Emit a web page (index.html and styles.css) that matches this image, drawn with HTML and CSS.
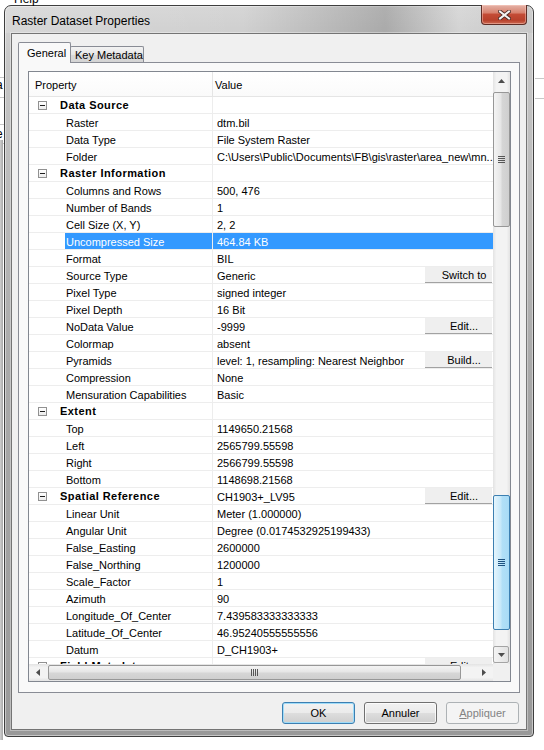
FILE: index.html
```html
<!DOCTYPE html>
<html lang="en">

<head>
  <meta charset="UTF-8">
  <title>Raster Dataset Properties</title>
  <link rel="stylesheet" href="styles.css">
</head>

<body>
  <div class="desktop">
    <!-- app behind the dialog -->
    <span class="behind-help">Help</span>
    <div class="behind-left">
      <span class="bl-line l1"></span>
      <span class="bl-char c1">a</span>
      <span class="bl-line l2"></span>
      <span class="bl-line l3"></span>
      <span class="bl-char c2">e</span>
      <span class="bl-line l4"></span>
      <span class="bl-bar"></span>
    </div>
    <div class="behind-right">
      <span class="br-line r1"></span>
      <span class="br-line r2"></span>
    </div>

    <div class="window">
      <div class="titlebar">
        <span class="title">Raster Dataset Properties</span>
        <div class="close">
          <svg width="13" height="10" viewBox="0 0 13 10">
            <path d="M2 1.5 L11 8.5 M11 1.5 L2 8.5" stroke="#4b2a26" stroke-width="3.8" stroke-linecap="square" fill="none"/>
            <path d="M2 1.5 L11 8.5 M11 1.5 L2 8.5" stroke="#f4f4f4" stroke-width="2" stroke-linecap="square" fill="none"/>
          </svg>
        </div>
      </div>

      <div class="client">
        <div class="tabs">
          <div class="tab active">General</div>
          <div class="tab">Key Metadata</div>
        </div>

        <div class="tab-page">
          <div class="grid">
            <div class="grid-main">
              <div class="grid-head">
                <div class="prop">Property</div>
                <div class="val">Value</div>
              </div>
              <div class="grid-body">
                <div class="row group"><div class="prop"><span class="minus"></span><span class="label">Data Source</span></div><div class="val"></div></div>
                <div class="row"><div class="prop"><span class="label">Raster</span></div><div class="val"><span class="vtext">dtm.bil</span></div></div>
                <div class="row"><div class="prop"><span class="label">Data Type</span></div><div class="val"><span class="vtext">File System Raster</span></div></div>
                <div class="row"><div class="prop"><span class="label">Folder</span></div><div class="val"><span class="vtext">C:\Users\Public\Documents\FB\gis\raster\area_new\mn..</span></div></div>
                <div class="row group"><div class="prop"><span class="minus"></span><span class="label">Raster Information</span></div><div class="val"></div></div>
                <div class="row"><div class="prop"><span class="label">Columns and Rows</span></div><div class="val"><span class="vtext">500, 476</span></div></div>
                <div class="row"><div class="prop"><span class="label">Number of Bands</span></div><div class="val"><span class="vtext">1</span></div></div>
                <div class="row"><div class="prop"><span class="label">Cell Size (X, Y)</span></div><div class="val"><span class="vtext">2, 2</span></div></div>
                <div class="row sel"><div class="prop"><span class="label">Uncompressed Size</span></div><div class="val"><span class="vtext">464.84 KB</span></div></div>
                <div class="row"><div class="prop"><span class="label">Format</span></div><div class="val"><span class="vtext">BIL</span></div></div>
                <div class="row"><div class="prop"><span class="label">Source Type</span></div><div class="val"><span class="vtext">Generic</span><span class="cell-btn">Switch to</span></div></div>
                <div class="row"><div class="prop"><span class="label">Pixel Type</span></div><div class="val"><span class="vtext">signed integer</span></div></div>
                <div class="row"><div class="prop"><span class="label">Pixel Depth</span></div><div class="val"><span class="vtext">16 Bit</span></div></div>
                <div class="row"><div class="prop"><span class="label">NoData Value</span></div><div class="val"><span class="vtext">-9999</span><span class="cell-btn">Edit...</span></div></div>
                <div class="row"><div class="prop"><span class="label">Colormap</span></div><div class="val"><span class="vtext">absent</span></div></div>
                <div class="row"><div class="prop"><span class="label">Pyramids</span></div><div class="val"><span class="vtext">level: 1, resampling: Nearest Neighbor</span><span class="cell-btn">Build...</span></div></div>
                <div class="row"><div class="prop"><span class="label">Compression</span></div><div class="val"><span class="vtext">None</span></div></div>
                <div class="row"><div class="prop"><span class="label">Mensuration Capabilities</span></div><div class="val"><span class="vtext">Basic</span></div></div>
                <div class="row group"><div class="prop"><span class="minus"></span><span class="label">Extent</span></div><div class="val"></div></div>
                <div class="row"><div class="prop"><span class="label">Top</span></div><div class="val"><span class="vtext">1149650.21568</span></div></div>
                <div class="row"><div class="prop"><span class="label">Left</span></div><div class="val"><span class="vtext">2565799.55598</span></div></div>
                <div class="row"><div class="prop"><span class="label">Right</span></div><div class="val"><span class="vtext">2566799.55598</span></div></div>
                <div class="row"><div class="prop"><span class="label">Bottom</span></div><div class="val"><span class="vtext">1148698.21568</span></div></div>
                <div class="row group"><div class="prop"><span class="minus"></span><span class="label">Spatial Reference</span></div><div class="val"><span class="vtext">CH1903+_LV95</span><span class="cell-btn">Edit...</span></div></div>
                <div class="row"><div class="prop"><span class="label">Linear Unit</span></div><div class="val"><span class="vtext">Meter (1.000000)</span></div></div>
                <div class="row"><div class="prop"><span class="label">Angular Unit</span></div><div class="val"><span class="vtext">Degree (0.0174532925199433)</span></div></div>
                <div class="row"><div class="prop"><span class="label">False_Easting</span></div><div class="val"><span class="vtext">2600000</span></div></div>
                <div class="row"><div class="prop"><span class="label">False_Northing</span></div><div class="val"><span class="vtext">1200000</span></div></div>
                <div class="row"><div class="prop"><span class="label">Scale_Factor</span></div><div class="val"><span class="vtext">1</span></div></div>
                <div class="row"><div class="prop"><span class="label">Azimuth</span></div><div class="val"><span class="vtext">90</span></div></div>
                <div class="row"><div class="prop"><span class="label">Longitude_Of_Center</span></div><div class="val"><span class="vtext">7.439583333333333</span></div></div>
                <div class="row"><div class="prop"><span class="label">Latitude_Of_Center</span></div><div class="val"><span class="vtext">46.95240555555556</span></div></div>
                <div class="row"><div class="prop"><span class="label">Datum</span></div><div class="val"><span class="vtext">D_CH1903+</span></div></div>
                <div class="row group"><div class="prop"><span class="minus"></span><span class="label">Field Metadata</span></div><div class="val"><span class="vtext"></span><span class="cell-btn">Edit...</span></div></div>
              </div>
            </div>

            <div class="vscroll">
              <div class="arrow up">
                <svg width="7" height="4" viewBox="0 0 7 4"><path d="M0 4 L3.5 0 L7 4 Z" fill="#4d4d4d"/></svg>
              </div>
              <div class="thumb gray-v"><span class="grip-v"></span></div>
              <div class="thumb blue-v"><span class="grip-v"></span></div>
              <div class="arrow down boxed">
                <svg width="7" height="4" viewBox="0 0 7 4"><path d="M0 0 L7 0 L3.5 4 Z" fill="#4d4d4d"/></svg>
              </div>
            </div>

            <div class="hscroll">
              <div class="arrow left">
                <svg width="4" height="7" viewBox="0 0 4 7"><path d="M4 0 L4 7 L0 3.5 Z" fill="#4d4d4d"/></svg>
              </div>
              <div class="thumb gray-h"><span class="grip-h"></span></div>
              <div class="arrow right">
                <svg width="4" height="7" viewBox="0 0 4 7"><path d="M0 0 L4 3.5 L0 7 Z" fill="#4d4d4d"/></svg>
              </div>
            </div>
            <div class="corner"></div>
          </div>
        </div>

        <div class="buttons">
          <button class="btn default">OK</button>
          <button class="btn">Annuler</button>
          <button class="btn disabled"><u>A</u>ppliquer</button>
        </div>
      </div>
    </div>
  </div>
</body>

</html>
```

FILE: styles.css
```css
* {
  box-sizing: border-box;
}

body {
  margin: 0;
  background: #fff;
  font-family: "Liberation Sans", Arial, sans-serif;
  font-size: 11px;
  color: #000;
  overflow: hidden;
}

.desktop {
  position: relative;
  width: 544px;
  height: 750px;
  padding: 5px 0 0 4px;
}

/* stuff from the application under the dialog */
.behind-help {
  position: absolute;
  left: 14px;
  top: -8px;
  font-size: 12px;
}

.behind-left {
  position: absolute;
  left: 0;
  top: 0;
  width: 4px;
  height: 750px;
  overflow: hidden;
}

.bl-line {
  position: absolute;
  left: 0;
  width: 4px;
  height: 1px;
  background: #c8c8c8;
}

.l1 { top: 77px; }
.l2 { top: 97px; }
.l3 { top: 124px; }
.l4 { top: 143px; }

.bl-char {
  position: absolute;
  left: -4px;
  font-size: 12px;
}

.c1 { top: 78px; }
.c2 { top: 127px; }

.bl-bar {
  position: absolute;
  left: 0;
  top: 140px;
  width: 3px;
  height: 600px;
  background: linear-gradient(90deg, #d0d0d0, #a8a8a8);
}

.behind-right {
  position: absolute;
  left: 535px;
  top: 0;
  width: 9px;
  height: 750px;
}

.br-line {
  position: absolute;
  left: 0;
  width: 9px;
  height: 1px;
  background: #c8c8c8;
}

.r1 { top: 78px; }
.r2 { top: 98px; }

/* dialog window */
.window {
  width: 530px;
  height: 732px;
  border: 1px solid #3e3e3e;
  border-radius: 7px 7px 4px 4px;
  padding: 0 6px 6px;
  display: flex;
  flex-direction: column;
  background: linear-gradient(180deg, #d6d6d6 0, #c6c6c6 60px, #aaaaaa 360px, #999 100%);
  box-shadow: inset 0 0 0 1px rgba(255, 255, 255, 0.45);
}

.titlebar {
  height: 27px;
  margin: 0 -6px;
  padding: 0 6px 0 7px;
  display: flex;
  justify-content: space-between;
  align-items: center;
  border-radius: 6px 6px 0 0;
  background: linear-gradient(90deg, rgba(255, 255, 255, 0.14) 0, rgba(255, 255, 255, 0) 45%, rgba(0, 0, 0, 0.18) 72%, rgba(255, 255, 255, 0.08) 86%, rgba(0, 0, 0, 0.04) 100%);
}

.title {
  font-size: 12px;
  margin-top: 2px;
}

.close {
  align-self: flex-start;
  margin-top: -1px;
  width: 46px;
  height: 20px;
  border: 1px solid #5e2d26;
  border-top: none;
  border-radius: 0 0 4px 4px;
  background: linear-gradient(180deg, #e4b3a8 0, #d88370 40%, #c34b35 50%, #b8412c 80%, #cc6a52 100%);
  box-shadow: inset 0 0 0 1px rgba(255, 210, 200, 0.45);
  display: flex;
  justify-content: center;
  align-items: center;
}

.client {
  flex: 1;
  border: 1px solid #747474;
  background: #f0f0f0;
  display: flex;
  flex-direction: column;
  box-shadow: 0 0 0 1px rgba(255, 255, 255, 0.35);
}

/* tabs */
.tabs {
  display: flex;
  align-items: flex-end;
  height: 20px;
  margin-top: 8px;
  padding-left: 6px;
  position: relative;
  z-index: 1;
}

.tab {
  height: 16px;
  width: 74px;
  margin-left: -1px;
  border: 1px solid #898c95;
  border-bottom: none;
  border-radius: 2px 2px 0 0;
  background: linear-gradient(180deg, #f3f3f3, #e6e6e6 50%, #dadada 51%, #d4d4d4);
  padding-left: 4px;
  line-height: 16px;
}

.tab.active {
  height: 21px;
  width: 53px;
  margin-left: 0;
  margin-bottom: -1px;
  position: relative;
  z-index: 2;
  background: #f9f9f9;
  padding-left: 8px;
  line-height: 20px;
}

.tab-page {
  height: 631px;
  margin: 0 6px;
  border: 1px solid #898c95;
  background: #f9f9f9;
  padding: 8px 9px 0;
}

/* property grid */
.grid {
  width: 483px;
  height: 611px;
  border: 1px solid #828790;
  background: #fff;
  display: grid;
  grid-template-columns: 464px 17px;
  grid-template-rows: 592px 17px;
}

.grid-main {
  overflow: hidden;
}

.grid-head {
  display: flex;
  height: 25px;
  border-bottom: 1px solid #e5e5e5;
  background: linear-gradient(180deg, #fff, #fafafa);
  line-height: 26px;
}

.grid-head .prop {
  width: 184px;
  padding-left: 6px;
  border-right: 1px solid #e5e5e5;
}

.grid-head .val {
  flex: 1;
  padding-left: 2px;
}

.grid-body {
  height: 567px;
  overflow: hidden;
}

.row {
  display: flex;
  height: 17px;
  border-bottom: 1px solid #ededed;
  line-height: 18px;
}

.row .prop {
  width: 184px;
  flex: none;
  display: flex;
  padding-left: 36px;
  border-right: 1px solid #ededed;
  white-space: nowrap;
}

.row .label {
  flex: 1;
  padding-left: 1px;
}

.row.group .prop {
  padding-left: 9px;
  align-items: center;
}

.row.group .label {
  font-weight: bold;
  letter-spacing: 0.45px;
  padding-left: 13px;
}

.minus {
  width: 9px;
  height: 9px;
  flex: none;
  border: 1px solid #919191;
  background: linear-gradient(180deg, #fff, #ececec);
  position: relative;
}

.minus::after {
  content: "";
  position: absolute;
  left: 1px;
  top: 3px;
  width: 5px;
  height: 1px;
  background: #1e1e1e;
}

.row .val {
  flex: 1;
  min-width: 0;
  display: flex;
  padding-left: 4px;
}

.vtext {
  flex: 1;
  min-width: 0;
  white-space: nowrap;
  overflow: hidden;
  text-overflow: ellipsis;
}

.cell-btn {
  flex: none;
  width: 67px;
  height: 16px;
  margin-right: 1px;
  background: #efefef;
  border-bottom: 1px solid #a2a2a2;
  text-align: center;
  padding-left: 11px;
  line-height: 16px;
}

.row.sel .label,
.row.sel .val {
  background: #3399ff;
  color: #fff;
}

/* scrollbars */
.vscroll {
  grid-row: 1;
  grid-column: 2;
  display: flex;
  flex-direction: column;
  background: linear-gradient(90deg, #e3e3e3, #f3f3f3 20%, #f3f3f3 80%, #e3e3e3);
}

.hscroll {
  grid-row: 2;
  grid-column: 1;
  display: flex;
  align-items: center;
  background: linear-gradient(180deg, #e3e3e3, #f3f3f3 20%, #f3f3f3 80%, #e3e3e3);
}

.corner {
  grid-row: 2;
  grid-column: 2;
  background: #f0f0f0;
}

.arrow {
  width: 17px;
  height: 17px;
  flex: none;
  display: flex;
  justify-content: center;
  align-items: center;
}

.arrow.boxed {
  width: 16px;
  border: 1px solid #a4a4a4;
  border-radius: 2px;
  background: linear-gradient(90deg, #f4f4f4, #e2e2e2);
}

.arrow.down {
  margin-top: 16px;
}

.thumb {
  display: flex;
  justify-content: center;
  align-items: center;
  border-radius: 2px;
}

.gray-v {
  height: 135px;
  margin-top: 3px;
  border: 1px solid #979797;
  background: linear-gradient(90deg, #f4f4f4, #e6e6e6 45%, #d6d6d6 55%, #cfcfcf);
}

.blue-v {
  height: 135px;
  margin-top: 268px;
  border: 1px solid #3c7fb1;
  background: linear-gradient(90deg, #e5f5fd, #c6e8fa 45%, #b1dff7 55%, #a8dbf6);
}

.grip-v {
  width: 7px;
  height: 7px;
  background: repeating-linear-gradient(180deg, #565656 0, #565656 1px, transparent 1px, transparent 2px);
}

.blue-v .grip-v {
  background: repeating-linear-gradient(180deg, #1c5180 0, #1c5180 1px, transparent 1px, transparent 2px);
}

.gray-h {
  width: 413px;
  height: 15px;
  margin-left: 2px;
  border: 1px solid #979797;
  background: linear-gradient(180deg, #f4f4f4, #e6e6e6 45%, #d6d6d6 55%, #cfcfcf);
}

.grip-h {
  width: 7px;
  height: 7px;
  background: repeating-linear-gradient(90deg, #565656 0, #565656 1px, transparent 1px, transparent 2px);
}

.arrow.right {
  margin-left: auto;
  margin-right: 1px;
}

/* dialog buttons */
.buttons {
  display: flex;
  justify-content: flex-end;
  gap: 9px;
  margin-top: 9px;
  padding-right: 7px;
}

.btn {
  width: 73px;
  height: 22px;
  padding: 0;
  font-family: "Liberation Sans", Arial, sans-serif;
  font-size: 11px;
  color: #000;
  border: 1px solid #707070;
  border-radius: 3px;
  background: linear-gradient(180deg, #f2f2f2 0, #ebebeb 48%, #dddddd 52%, #cfcfcf 100%);
  box-shadow: inset 0 0 0 1px rgba(255, 255, 255, 0.75);
}

.btn.default {
  border-color: #3c7fb1;
  box-shadow: inset 0 0 0 1px #9fdcf9;
}

.btn.disabled {
  border-color: #adb2b5;
  background: #f4f4f4;
  color: #838383;
  box-shadow: none;
}
```
